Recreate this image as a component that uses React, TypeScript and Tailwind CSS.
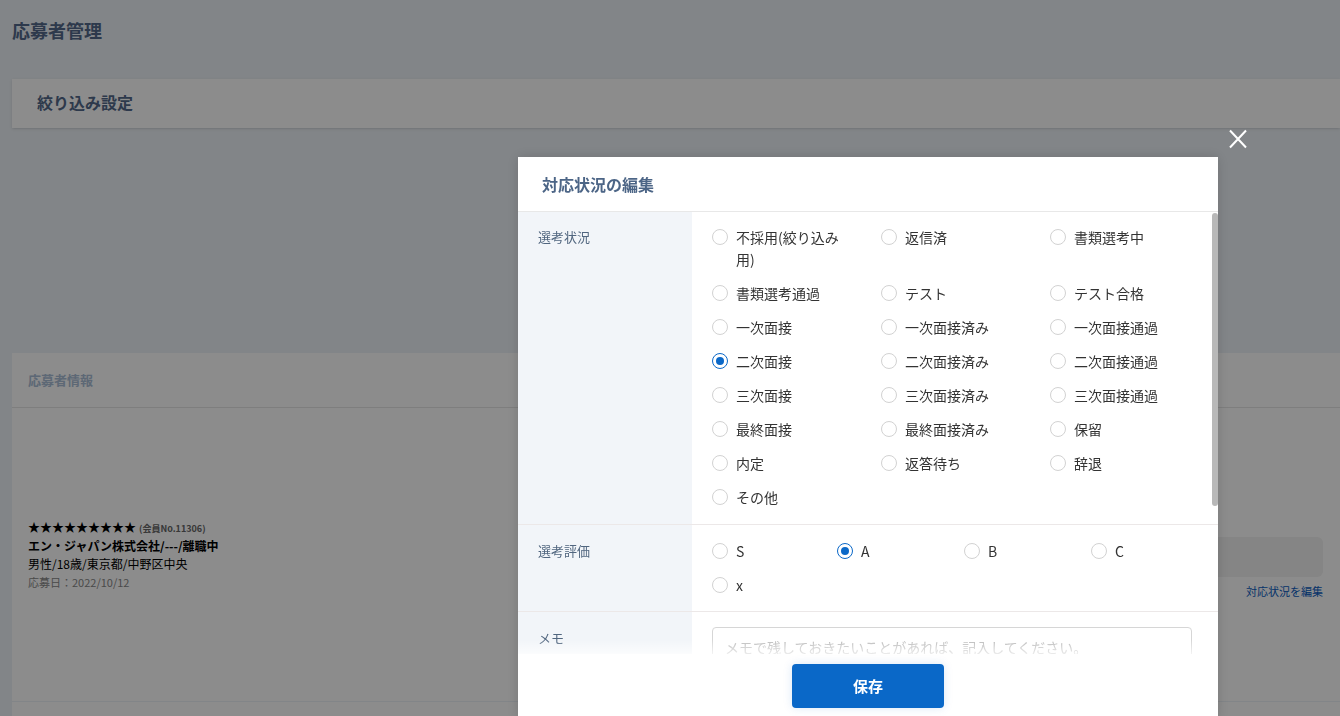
import { useState } from "react";

const font = { fontFamily: '"Noto Sans CJK JP", "Noto Sans", sans-serif' };

const statuses = [
  "不採用(絞り込み用)",
  "返信済",
  "書類選考中",
  "書類選考通過",
  "テスト",
  "テスト合格",
  "一次面接",
  "一次面接済み",
  "一次面接通過",
  "二次面接",
  "二次面接済み",
  "二次面接通過",
  "三次面接",
  "三次面接済み",
  "三次面接通過",
  "最終面接",
  "最終面接済み",
  "保留",
  "内定",
  "返答待ち",
  "辞退",
  "その他",
];

const grades = ["S", "A", "B", "C", "x"];

function Radio({
  label,
  checked,
  onClick,
}: {
  label: string;
  checked: boolean;
  onClick: () => void;
}) {
  return (
    <button
      type="button"
      onClick={onClick}
      className="flex items-start gap-2 text-left pr-[30px]"
    >
      <span
        className={`mt-[3px] shrink-0 w-4 h-4 rounded-full border flex items-center justify-center bg-white ${
          checked ? "border-[#0a68c8]" : "border-[#d2d2d2]"
        }`}
      >
        {checked && <span className="w-2 h-2 rounded-full bg-[#0a68c8]" />}
      </span>
      <span className="text-[14px] leading-[22px] text-[#333]">{label}</span>
    </button>
  );
}

export default function App() {
  const [status, setStatus] = useState("二次面接");
  const [grade, setGrade] = useState("A");

  return (
    <div
      className="relative min-h-screen h-[716px] overflow-hidden bg-[#edf2f7]"
      style={font}
    >
      {/* page behind the dialog */}
      <div className="pl-3 pt-[18px]">
        <h1 className="text-[18px] leading-6 font-bold text-[#53698a]">
          応募者管理
        </h1>

        <div className="mt-[37px] h-[49px] bg-white shadow-sm flex items-center pl-[25px] pb-[4px]">
          <h2 className="text-[16px] font-bold text-[#53698a]">絞り込み設定</h2>
        </div>

        <div className="mt-[225px] bg-white h-[348px] flex flex-col">
          <div className="h-[55px] border-b border-[#e6e6e6] flex items-center pl-4">
            <h3 className="text-[13px] font-bold text-[#a9bdd6]">応募者情報</h3>
          </div>
          <div className="flex-1 flex items-start justify-between pl-4 pr-[17px]">
            <div className="text-black pt-[110px]">
              <div className="flex items-baseline">
                <span className="text-[12px] leading-[18px] font-bold">
                  ★★★★★★★★★
                </span>
                <span className="text-[9px] font-bold text-[#666] ml-[3px]">
                  (会員No.11306)
                </span>
              </div>
              <p className="text-[12px] leading-[19px] font-bold">
                エン・ジャパン株式会社/---/離職中
              </p>
              <p className="text-[12px] leading-[18px]">男性/18歳/東京都/中野区中央</p>
              <p className="text-[11px] leading-[18px] text-[#888]">
                応募日：2022/10/12
              </p>
            </div>
            <div className="flex flex-col items-end gap-[6px] pt-[129px]">
              <div className="w-[420px] h-[40px] rounded-md bg-[#f2f2f2]" />
              <a href="#" className="text-[11px] leading-4 text-[#0a5cbf]">
                対応状況を編集
              </a>
            </div>
          </div>
        </div>
        <div className="mt-px bg-white h-[40px]" />
      </div>

      {/* backdrop */}
      <div className="fixed inset-0 bg-black/45" />

      {/* close button */}
      <button
        type="button"
        className="fixed left-[1228px] top-[129px] w-5 h-5 flex items-center justify-center"
      >
        <svg width="20" height="20" viewBox="0 0 20 20">
          <path
            d="M2 1.5 L18 18.5 M18 1.5 L2 18.5"
            stroke="white"
            strokeWidth="2"
          />
        </svg>
      </button>

      {/* edit dialog */}
      <div className="fixed left-[518px] top-[157px] w-[700px] bg-white shadow-[0_0_12px_rgba(0,0,0,0.15)] flex flex-col">
        <div className="h-[55px] border-b border-[#e8e8e8] flex items-center pl-6">
          <h2 className="text-[16px] font-bold text-[#4c6586]">対応状況の編集</h2>
        </div>

        <div className="relative h-[442px] overflow-hidden">
          <div className="flex border-b border-[#ece8e8]">
            <div className="w-[174px] shrink-0 bg-[#f2f5f9] pl-5 pt-[14px] text-[13px] leading-[22px] text-[#51667f]">
              選考状況
            </div>
            <div className="flex-1 grid grid-cols-[169px_169px_1fr] gap-y-3 pl-5 pt-[14px] pb-4">
              {statuses.map((s) => (
                <Radio
                  key={s}
                  label={s}
                  checked={status === s}
                  onClick={() => setStatus(s)}
                />
              ))}
            </div>
          </div>

          <div className="flex border-b border-[#ece8e8]">
            <div className="w-[174px] shrink-0 bg-[#f2f5f9] pl-5 pt-[15px] text-[13px] leading-[22px] text-[#51667f]">
              選考評価
            </div>
            <div className="flex-1 grid grid-cols-[125px_127px_127px_1fr] gap-y-3 pl-5 pt-[15px] pb-[15px]">
              {grades.map((g) => (
                <Radio
                  key={g}
                  label={g}
                  checked={grade === g}
                  onClick={() => setGrade(g)}
                />
              ))}
            </div>
          </div>

          <div className="flex">
            <div className="w-[174px] shrink-0 bg-[#f2f5f9] pl-5 pt-[15px] text-[13px] leading-[22px] text-[#51667f] h-[120px]">
              メモ
            </div>
            <div className="flex-1 pl-5 pt-[15px]">
              <textarea
                className="w-[480px] h-[90px] border border-[#d6d6d6] rounded px-3 py-[6px] text-[14px] leading-[26px] text-[#333] placeholder:text-[#bbb] resize-none outline-none"
                placeholder="メモで残しておきたいことがあれば、記入してください。"
              />
            </div>
          </div>

          {/* scroll thumb */}
          <div className="absolute right-0 top-[1px] w-[6px] h-[293px] rounded-sm bg-[#b8b8b8]" />
          <div className="absolute left-0 right-0 bottom-0 h-[14px] bg-gradient-to-b from-white/0 to-white/70" />
        </div>

        <div className="h-[66px] bg-white flex justify-center pt-[10px]">
          <button
            type="button"
            className="w-[152px] h-[44px] rounded bg-[#0a68c8] text-white text-[15px] font-bold shadow-[0_0_10px_rgba(10,104,200,0.15)]"
          >
            保存
          </button>
        </div>
      </div>
    </div>
  );
}
